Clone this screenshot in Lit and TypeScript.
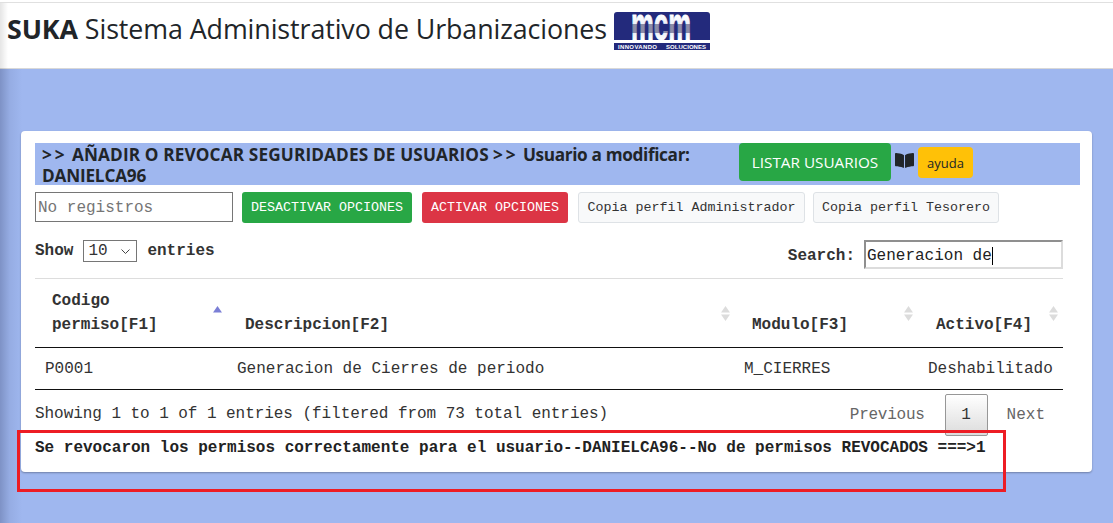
import { LitElement, html, css } from "lit";
import { customElement } from "lit/decorators.js";

@customElement("app-root")
export class AppRoot extends LitElement {
  static styles = css`
    :host { display: block; position: relative; width: 1113px; height: 523px; overflow: hidden; background: #9fb7ef; font-family: "Liberation Mono", monospace; color: #212529; font-size: 16px; }
    * { box-sizing: border-box; }
    .topline { height: 3px; background: #fff; border-bottom: 1px solid #e0e0e0; }
    .header { height: 66px; background: #fff; border-bottom: 1px solid #d8d8d8; display: flex; align-items: flex-start; padding: 7px 0 0 7px; }
    .brand { font-family: "Open Sans", sans-serif; font-size: 26.8px; line-height: 38px; color: #212529; white-space: nowrap; margin-right: 7px; letter-spacing: -0.08px; }
    .brand b { font-weight: 700; }
    .logo { display: block; margin-top: 2px; overflow: visible; }
    .edge { position: absolute; left: 0; top: 3px; bottom: 0; width: 22px; background: linear-gradient(to right, rgba(40,50,90,.28), rgba(40,50,90,.08) 45%, rgba(40,50,90,0)); pointer-events: none; }
    .edge.light { height: 66px; bottom: auto; background: linear-gradient(to right, rgba(0,0,0,.1), rgba(0,0,0,0)); width: 8px; }
    .edge.low { top: 69px; }
    .card { margin: 62px 21px 0 21px; height: 341px; background: #fff; border-radius: 4px; box-shadow: 0 1px 2px rgba(0,0,0,.3); padding: 12px 12px 0 14px; }
    .banner { display: flex; height: 42px; background: #9fb7ef; align-items: flex-start; }
    .title { width: 704px; padding: 2px 0 0 7px; font-family: "Open Sans", sans-serif; font-weight: 700; font-size: 17.2px; line-height: 20.5px; letter-spacing: -0.2px; }
    .gt { letter-spacing: 3px; }
    .caps { letter-spacing: 0.14px; }
    .low { letter-spacing: -0.35px; }
    .btn-list { width: 152px; height: 38px; background: #28a745; color: #fff; border-radius: 4px; font-family: "Open Sans", sans-serif; font-size: 15.3px; display: flex; align-items: center; justify-content: center; }
    .book { margin: 9px 4px 0 4px; display: block; }
    .btn-help { width: 55px; height: 31px; margin-top: 4px; background: #ffc107; border-radius: 4px; font-family: "Open Sans", sans-serif; font-size: 13px; display: flex; align-items: center; justify-content: center; }
    .actions { display: flex; align-items: flex-start; margin-top: 7px; }
    .noreg { width: 198px; height: 30px; border: 1px solid #767676; padding: 1px 0 0 2px; font-size: 16px; line-height: 28px; color: #757575; margin-right: 9px; }
    .btn { height: 31px; border-radius: 3px; font-size: 13.33px; display: flex; align-items: center; justify-content: center; border: 1px solid transparent; }
    .green { width: 170px; background: #28a745; color: #fff; margin-right: 10px; }
    .red { width: 146px; background: #dc3545; color: #fff; margin-right: 10px; }
    .light { background: #f8f9fa; border-color: #dee2e6; color: #333; }
    .l1 { width: 227px; margin-right: 8px; }
    .l2 { width: 186px; }
    .wrap { width: 1028px; }
    .controls { display: flex; justify-content: space-between; align-items: flex-start; margin-top: 17px; height: 29px; font-weight: 700; }
    .len { display: flex; align-items: center; height: 22px; color: #333; }
    .pick { position: relative; width: 54px; height: 22px; margin: 0 10px; }
    select { appearance: none; -webkit-appearance: none; display: block; width: 54px; height: 22px; font-family: "Liberation Mono", monospace; font-size: 16px; border: 1px solid #767676; background: #fff; border-radius: 0; padding: 0 0 0 4px; color: #333; }
    .chev { position: absolute; right: 7px; top: 9px; width: 9px; height: 5px; pointer-events: none; }
    .find { display: flex; align-items: center; height: 29px; color: #333; padding-top: 0; }
    .lbl { padding-top: 2px; }
    .search { width: 199px; height: 29px; margin-left: 9px; border-style: solid; border-width: 2px; border-color: #8f8f8f #dcdcdc #dcdcdc #8f8f8f; font-weight: 400; padding: 2px 0 0 1px; color: #222; display: flex; align-items: center; }
    .caret { display: inline-block; width: 1px; height: 18px; background: #000; }
    table { width: 1028px; border-collapse: collapse; table-layout: fixed; margin-top: 9px; border-top: 1px solid #ddd; }
    th { position: relative; text-align: left; vertical-align: bottom; padding: 10px 18px 10px 17px; font-weight: 700; line-height: 24px; color: #333; border-bottom: 1px solid #111; }
    th.d { padding-left: 18px; }
    td { padding: 9px 10px 8px; line-height: 24px; height: 42px; color: #333; border-bottom: 1px solid #111; white-space: nowrap; }
    .sort { position: absolute; top: 27px; width: 9px; height: 15px; }
    .foot { display: flex; justify-content: space-between; align-items: flex-start; height: 48px; padding-top: 4px; color: #333; }
    .info { line-height: 20px; padding-top: 10px; letter-spacing: -0.05px; }
    .pages { display: flex; align-items: center; height: 42px; color: #666; margin-right: 18px; }
    .prev { letter-spacing: -0.25px; }
    .cur { width: 43px; height: 42px; margin: 0 19px 0 20px; border: 1px solid #979797; border-radius: 2px; background: linear-gradient(to bottom, #fff, #dcdcdc); display: flex; align-items: center; justify-content: center; color: #333; }
    .msg { font-weight: 700; line-height: 20px; white-space: nowrap; color: #222; }
    .mark { position: absolute; left: 17px; top: 430px; width: 989px; height: 62px; border: 3px solid #ed1c24; pointer-events: none; }
  `;

  private sort(x: number, up: string, down: string) {
    return html`<svg class="sort" style="left:${x}px" viewBox="0 0 9 15">
      <polygon points="4.5,0 9,6.5 0,6.5" fill=${up}></polygon>
      <polygon points="0,8.5 9,8.5 4.5,15" fill=${down}></polygon>
    </svg>`;
  }

  render() {
    const off = "#dcdcdc";
    return html`
      <div class="topline"></div>
      <div class="header">
        <div class="brand"><b>SUKA</b> Sistema Administrativo de Urbanizaciones</div>
        <svg class="logo" width="96" height="38" viewBox="0 0 96 38">
          <defs>
            <linearGradient id="mcmfill" gradientUnits="userSpaceOnUse" x1="0" y1="3" x2="0" y2="28">
              <stop offset="0" stop-color="#fff"></stop><stop offset=".36" stop-color="#eef0f8"></stop>
              <stop offset=".37" stop-color="#8c8ca8"></stop><stop offset=".72" stop-color="#8c8ca8"></stop>
              <stop offset=".73" stop-color="#eef0f8"></stop><stop offset="1" stop-color="#fff"></stop>
            </linearGradient>
          </defs>
          <path d="M3 0H93a3 3 0 0 1 3 3V28H0V3a3 3 0 0 1 3-3Z" fill="#232a7c"></path>
          <rect x="0" y="29" width="96" height="2" fill="#fff"></rect>
          <rect x="0" y="31" width="96" height="7" fill="#232a7c"></rect>
          <text x="47" y="28" text-anchor="middle" textLength="60" lengthAdjust="spacingAndGlyphs" font-family="Liberation Sans, sans-serif" font-weight="700" font-size="46" fill="url(#mcmfill)" stroke="url(#mcmfill)" stroke-width="1">mcm</text>
          <text x="4" y="36.6" font-family="Liberation Sans, sans-serif" font-weight="700" font-size="6" fill="#fff" textLength="39" lengthAdjust="spacing">INNOVANDO</text>
          <text x="52" y="36.6" font-family="Liberation Sans, sans-serif" font-weight="700" font-size="6" fill="#fff" textLength="40" lengthAdjust="spacing">SOLUCIONES</text>
        </svg>
      </div>
      <div class="card">
        <div class="banner">
          <div class="title"><span class="gt">&gt;&gt;</span> <span class="caps">AÑADIR O REVOCAR SEGURIDADES DE USUARIOS</span> <span class="gt">&gt;&gt;</span> <span class="low">Usuario a modificar:</span> DANIELCA96</div>
          <div class="btn-list">LISTAR USUARIOS</div>
          <svg class="book" width="19" height="17" viewBox="0 0 576 512"><path fill="#212529" d="M542.22 32.05c-54.8 3.11-163.72 14.43-230.96 55.59-4.64 2.84-7.27 7.89-7.27 13.17v363.87c0 11.55 12.63 18.85 23.28 13.49 69.18-34.82 169.23-44.32 218.7-46.92 16.89-.89 30.02-14.43 30.02-30.66V62.75c.01-17.71-15.35-31.74-33.77-30.7zM264.73 87.64C197.5 46.48 88.58 35.17 33.78 32.05 15.36 31.01 0 45.04 0 62.75V400.6c0 16.24 13.13 29.78 30.02 30.66 49.49 2.6 149.59 12.11 218.77 46.95 10.62 5.35 23.21-1.94 23.21-13.46V100.63c0-5.29-2.62-10.14-7.27-12.99z"></path></svg>
          <div class="btn-help">ayuda</div>
        </div>
        <div class="actions">
          <div class="noreg">No registros</div>
          <div class="btn green">DESACTIVAR OPCIONES</div>
          <div class="btn red">ACTIVAR OPCIONES</div>
          <div class="btn light l1">Copia perfil Administrador</div>
          <div class="btn light l2">Copia perfil Tesorero</div>
        </div>
        <div class="wrap">
          <div class="controls">
            <div class="len">Show <div class="pick"><select><option>10</option></select><svg class="chev" viewBox="0 0 9 5"><path d="M.5.5 4.5 4.5 8.500.5" fill="none" stroke="#444" stroke-width="1"></path></svg></div> entries</div>
            <div class="find"><span class="lbl">Search:</span><div class="search">Generacion de<span class="caret"></span></div></div>
          </div>
          <table>
            <colgroup><col style="width:192px"><col style="width:507px"><col style="width:184px"><col style="width:145px"></colgroup>
            <thead><tr>
              <th>Codigo permiso[F1]${this.sort(178, "#7b7fd6", "#fff")}</th>
              <th class="d">Descripcion[F2]${this.sort(494, off, off)}</th>
              <th class="d">Modulo[F3]${this.sort(170, off, off)}</th>
              <th class="d">Activo[F4]${this.sort(131, off, off)}</th>
            </tr></thead>
            <tbody><tr>
              <td>P0001</td><td>Generacion de Cierres de periodo</td><td>M_CIERRES</td><td>Deshabilitado</td>
            </tr></tbody>
          </table>
          <div class="foot">
            <div class="info">Showing 1 to 1 of 1 entries (filtered from 73 total entries)</div>
            <div class="pages"><span class="prev">Previous</span><div class="cur">1</div><span>Next</span></div>
          </div>
          <div class="msg">Se revocaron los permisos correctamente para el usuario--DANIELCA96--No de permisos REVOCADOS ===&gt;1</div>
        </div>
      </div>
      <div class="edge light"></div>
      <div class="edge low"></div>
      <div class="mark"></div>
    `;
  }
}
